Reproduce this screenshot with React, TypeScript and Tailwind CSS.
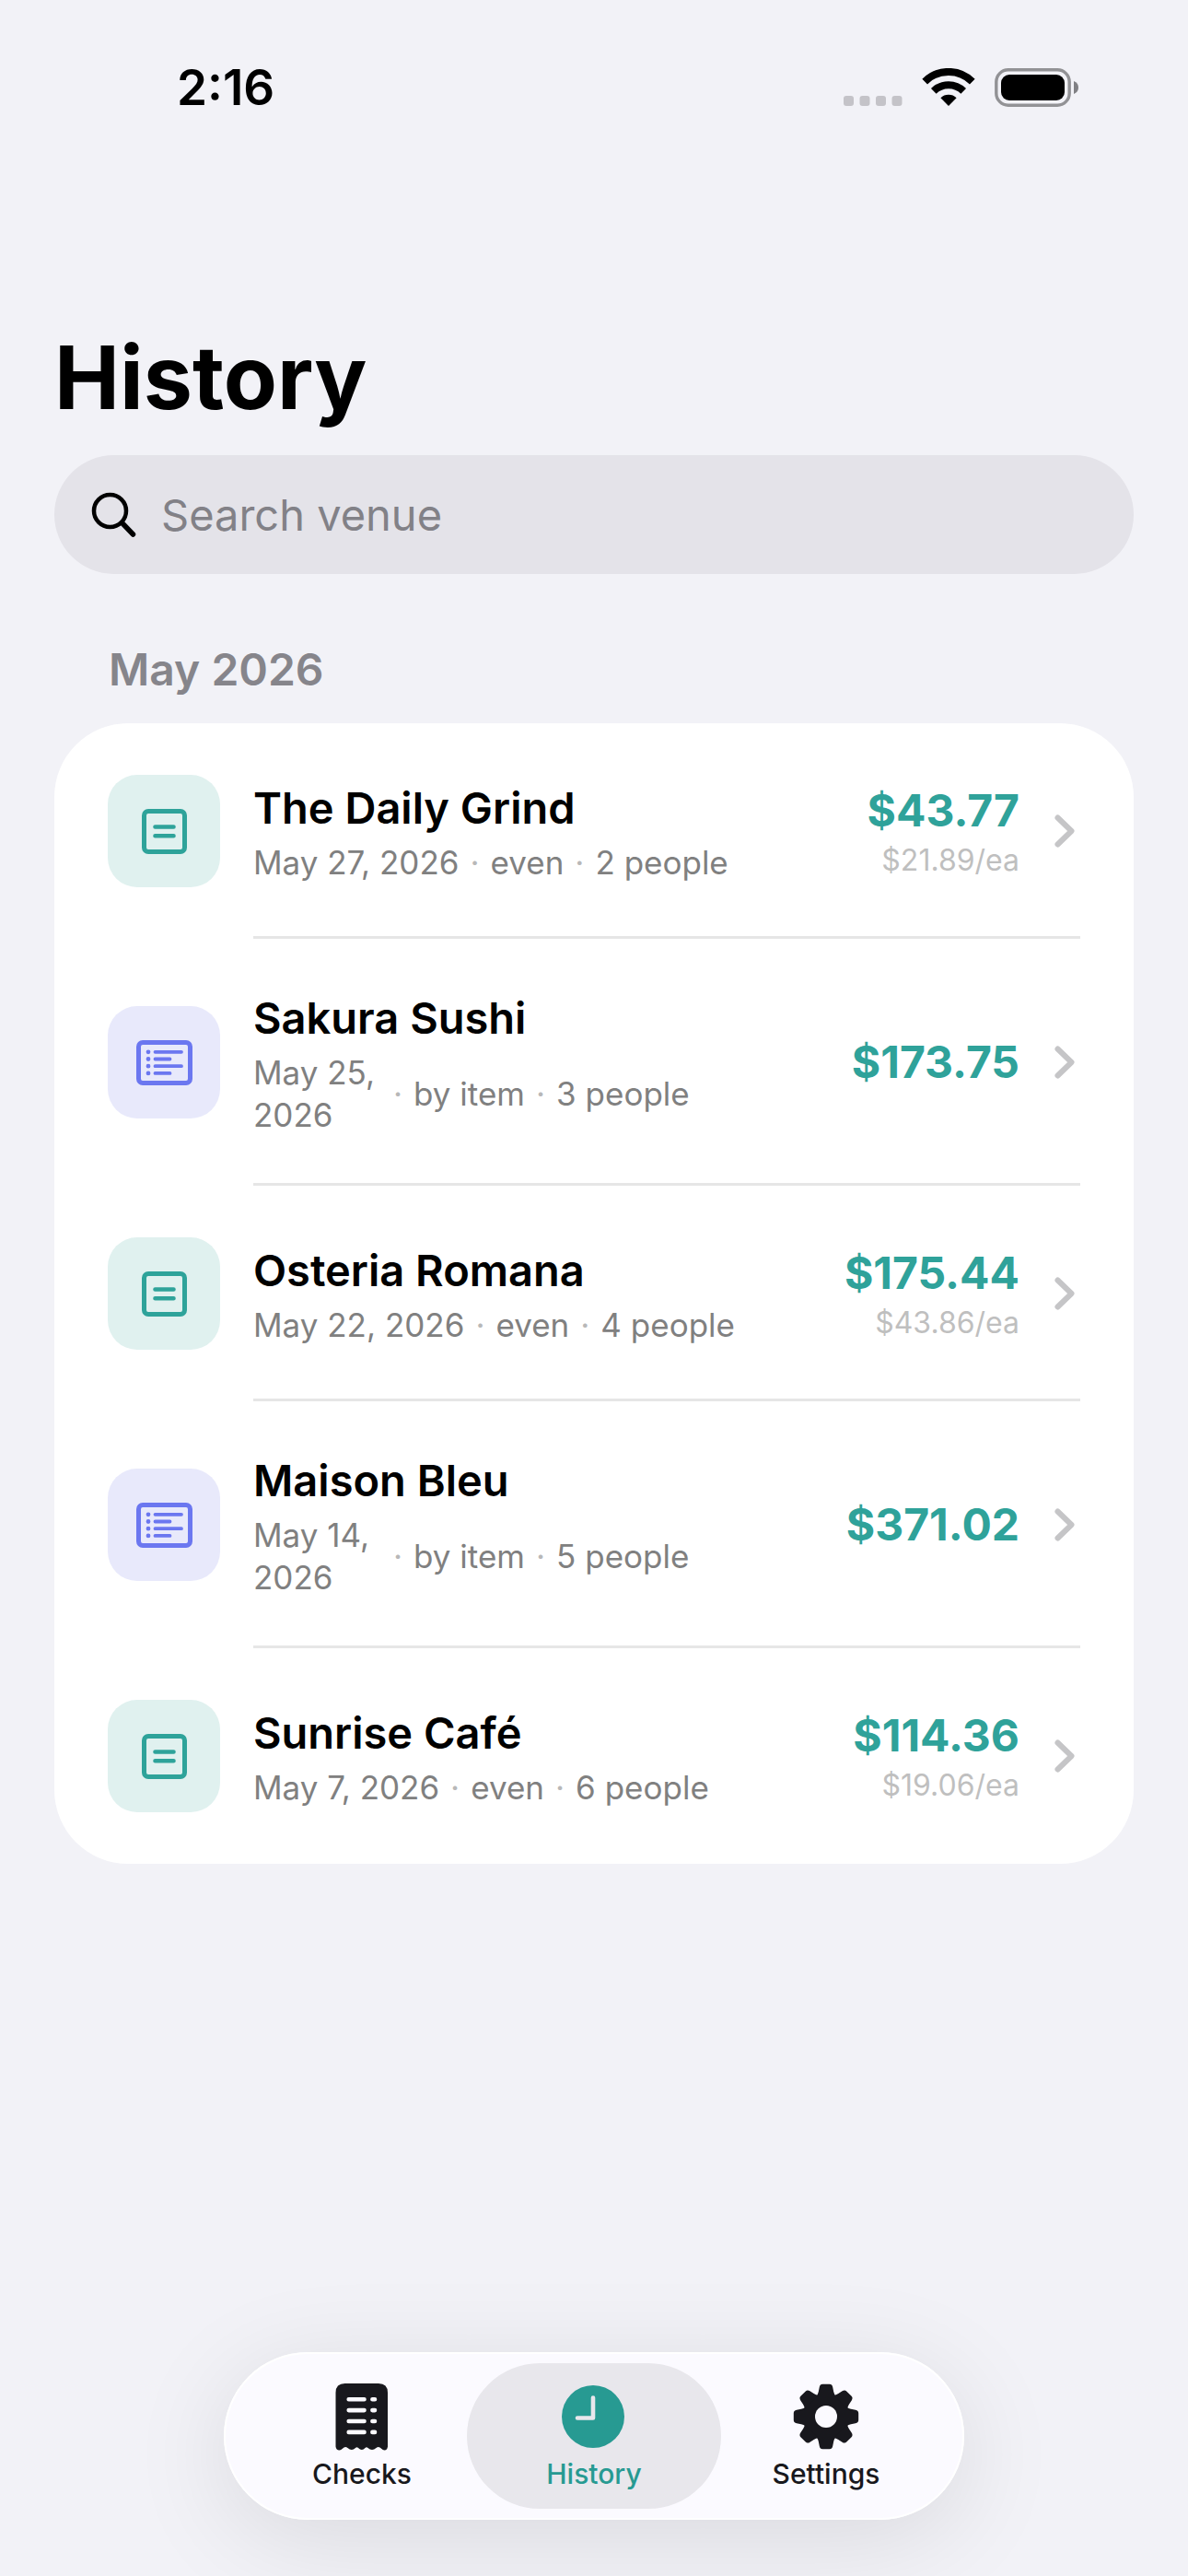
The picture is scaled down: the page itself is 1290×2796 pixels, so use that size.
type SplitMode = 'even' | 'by item'

type Check = {
    venue: string
    date: string
    mode: SplitMode
    people: number
    total: string
    each?: string
}

const checks: Check[] = [
    { venue: 'The Daily Grind', date: 'May 27, 2026', mode: 'even', people: 2, total: '$43.77', each: '$21.89/ea' },
    { venue: 'Sakura Sushi', date: 'May 25, 2026', mode: 'by item', people: 3, total: '$173.75' },
    { venue: 'Osteria Romana', date: 'May 22, 2026', mode: 'even', people: 4, total: '$175.44', each: '$43.86/ea' },
    { venue: 'Maison Bleu', date: 'May 14, 2026', mode: 'by item', people: 5, total: '$371.02' },
    { venue: 'Sunrise Café', date: 'May 7, 2026', mode: 'even', people: 6, total: '$114.36', each: '$19.06/ea' },
]

function StatusBar() {
    return (
        <div className="flex h-[190px] items-center justify-between pl-[192px] pr-[118px]">
            <span className="text-[53px] font-semibold leading-[60px]">2:16</span>
            <div className="flex items-center gap-[21px]">
                <svg width="64" height="42" viewBox="0 0 64 42" fill="#c4c3c8" aria-hidden="true">
                    <rect x="0" y="30" width="11" height="11" rx="3" />
                    <rect x="17.5" y="30" width="11" height="11" rx="3" />
                    <rect x="35" y="30" width="11" height="11" rx="3" />
                    <rect x="52.5" y="30" width="11" height="11" rx="3" />
                </svg>
                <svg width="58" height="42" viewBox="0 0 58 42" aria-hidden="true">
                    <path d="M3.2 14.6a36.5 36.5 0 0 1 51.6 0" fill="none" stroke="#000" strokeWidth="8" />
                    <path d="M12.8 24.8a23 23 0 0 1 32.4 0" fill="none" stroke="#000" strokeWidth="8" />
                    <path d="M29 41l-8.6-8.8a12.4 12.4 0 0 1 17.2 0z" />
                </svg>
                <svg width="92" height="42" viewBox="0 0 92 42" aria-hidden="true">
                    <rect x="1.8" y="1.8" width="79.4" height="38.4" rx="13" fill="none" stroke="#929295" strokeWidth="3.4" />
                    <rect x="7" y="7" width="69" height="28" rx="9" />
                    <path d="M86 14c3.4 1.2 5 4 5 7s-1.6 5.8-5 7z" fill="#808084" />
                </svg>
            </div>
        </div>
    )
}

function SearchField() {
    return (
        <label className="mx-[59px] flex h-[129px] items-center gap-[26px] rounded-full bg-[#e4e3e9] px-10">
            <svg width="50" height="50" viewBox="0 0 50 50" fill="none" stroke="#000" strokeLinecap="round" aria-hidden="true">
                <circle cx="20.5" cy="20.5" r="17.5" strokeWidth="4.5" />
                <path d="M33.5 33.5l12 12.5" strokeWidth="5.5" />
            </svg>
            <input
                type="search"
                aria-label="Search venue"
                placeholder="Search venue"
                className="min-w-0 flex-1 bg-transparent text-[47px] leading-[60px] outline-none placeholder:text-[#828187]"
            />
        </label>
    )
}

function ModeIcon({ mode }: { mode: SplitMode }) {
    if (mode === 'even') {
        return (
            <div className="flex size-[122px] shrink-0 items-center justify-center rounded-[32px] bg-[#e0f1ef]">
                <svg width="49" height="49" viewBox="0 0 49 49" fill="none" stroke="#2ea39a" strokeLinecap="round" aria-hidden="true">
                    <rect x="2.5" y="2.5" width="44" height="44" rx="4.5" strokeWidth="5" />
                    <path d="M14.5 19.5h20M14.5 29.3h20" strokeWidth="4.6" />
                </svg>
            </div>
        )
    }
    return (
        <div className="flex size-[122px] shrink-0 items-center justify-center rounded-[32px] bg-[#e8e9fb]">
            <svg width="61" height="49" viewBox="0 0 61 49" fill="none" stroke="#6b77f0" strokeLinecap="round" aria-hidden="true">
                <rect x="2.5" y="2.5" width="56" height="44" rx="4.5" strokeWidth="5" />
                <path d="M20.5 12.8h28.5M20.5 20.5h16M20.5 28.2h28.5M20.5 35.9h16" strokeWidth="3.8" />
                <path d="M13 12.8h.01M13 20.5h.01M13 28.2h.01M13 35.9h.01" strokeWidth="4.8" />
            </svg>
        </div>
    )
}

function CheckRow({ check }: { check: Check }) {
    return (
        <li className="group">
            <button type="button" className="flex w-full items-center gap-9 px-[58px] text-left">
                <ModeIcon mode={check.mode} />
                <span className="flex min-h-[234px] min-w-0 flex-1 items-center border-b-[3px] border-[#e6e6e6] pb-[51px] pt-[54px] group-last:border-transparent">
                    <span className="flex min-w-0 flex-1 flex-col gap-1">
                        <span className="text-[47px] font-semibold leading-[64px]">{check.venue}</span>
                        <span className="flex items-center gap-3 text-[35px] leading-[46px] text-[#808080]">
                            <span className={check.mode === 'by item' ? 'w-[140px]' : ''}>{check.date}</span>
                            <span className="text-[#b8b8b8]">·</span>
                            <span>{check.mode}</span>
                            <span className="text-[#b8b8b8]">·</span>
                            <span>{check.people} people</span>
                        </span>
                    </span>
                    <span className="flex flex-col items-end gap-1">
                        <span className="text-[48px] font-bold leading-[60px] text-[#2fa29a]">{check.total}</span>
                        {check.each && <span className="text-[32px] leading-10 text-[#bfbfbf]">{check.each}</span>}
                    </span>
                    <svg
                        className="ml-9 shrink-0"
                        width="30"
                        height="40"
                        viewBox="0 0 30 40"
                        fill="none"
                        stroke="#c5c5c7"
                        strokeWidth="6"
                        strokeLinecap="round"
                        strokeLinejoin="round"
                        aria-hidden="true"
                    >
                        <path d="M5.5 5.5l15 14.5l-15 14.5" />
                    </svg>
                </span>
            </button>
        </li>
    )
}

function ReceiptIcon() {
    return (
        <svg width="76" height="76" viewBox="0 0 76 76" aria-hidden="true">
            <path
                d="M9.5 12Q9.500 2 19.5 2H56Q66 2 66 12V70.5Q65.5 74.500 62.5 74.5Q60.5 74.3 57.5 71.5Q55.500 70.500 53.500 72Q49 76 44.500 72Q43 70.500 41.500 72Q38 76 34 72Q32.500 70.500 31 72Q27 76 22.500 72Q20.500 70.500 18.500 71.5Q15.5 74.3 13.5 74.5Q10 74.500 9.5 70.5Z"
                fill="#18181d"
            />
            <g stroke="#fbfaff" strokeWidth="4.6" strokeLinecap="round">
                <path d="M23.7 19.2h16.8M23.7 31.1h16.8M23.7 43h16.8M23.7 54.9h16.8" />
                <path d="M49.4 19.2h2.6M49.4 31.1h2.6M49.4 43h2.6M49.4 54.9h2.6" />
            </g>
        </svg>
    )
}

function ClockIcon() {
    return (
        <svg width="76" height="76" viewBox="0 0 76 76" fill="none" aria-hidden="true">
            <circle cx="37" cy="38" r="34" fill="#279a92" />
            <path d="M37 17.5v22H20" stroke="#e8e7ec" strokeWidth="4.6" strokeLinecap="round" strokeLinejoin="round" />
        </svg>
    )
}

const teeth = [0, 45, 90, 135, 180, 225, 270, 315]

function GearIcon() {
    return (
        <svg width="76" height="76" viewBox="-38 -38 76 76" fill="#18181d" aria-hidden="true">
            <circle r="25" />
            {teeth.map((angle) => (
                <path
                    key={angle}
                    transform={`rotate(${angle})`}
                    d="M-10.5 -22Q-8.8 -24.5 -8.2 -27L-7.2 -32Q-6.5 -35.2 -3.8 -35.2H3.8Q6.5 -35.2 7.2 -32L8.2 -27Q8.8 -24.5 10.5 -22Z"
                />
            ))}
            <circle r="12" fill="#fbfaff" />
        </svg>
    )
}

function TabBar() {
    const tab = 'flex h-[158px] w-[276px] flex-col items-center justify-center gap-[6px] rounded-full text-[30px] font-medium leading-9'
    return (
        <nav className="mx-auto mb-[61px] mt-auto flex rounded-full bg-[#fbfaff] p-3 shadow-[inset_0_0_0_2px_#ffffff,0_20px_110px_rgba(0,0,0,0.1)]">
            <button type="button" className={`${tab} text-[#18181d]`}>
                <ReceiptIcon />
                Checks
            </button>
            <button type="button" aria-current="page" className={`${tab} -mx-6 bg-[#e8e7ec] text-[#279a92]`}>
                <ClockIcon />
                History
            </button>
            <button type="button" className={`${tab} text-[#18181d]`}>
                <GearIcon />
                Settings
            </button>
        </nav>
    )
}

export default function App() {
    return (
        <div className="flex min-h-screen flex-col bg-[#f2f2f7] font-['Inter',sans-serif] text-black">
            <StatusBar />
            <h1 className="mb-6 mt-[160px] px-[59px] text-[95px] font-bold leading-[120px]">History</h1>
            <SearchField />
            <main className="mx-[59px] mb-20">
                <h2 className="mb-7 mt-[74px] px-[59px] text-[48px] font-semibold leading-[60px] text-[#86858b]">May 2026</h2>
                <ul className="rounded-[80px] bg-white">
                    {checks.map((check) => (
                        <CheckRow key={check.venue} check={check} />
                    ))}
                </ul>
            </main>
            <TabBar />
        </div>
    )
}
